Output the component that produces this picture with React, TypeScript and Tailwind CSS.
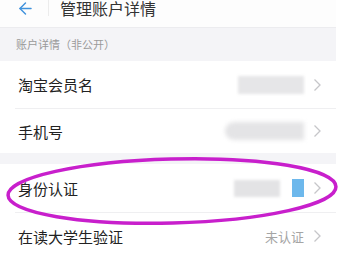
import { ArrowLeft } from "lucide-react";

function Chevron() {
  return (
    <svg width="9" height="14" viewBox="0 0 9 14" className="ml-[9px] shrink-0">
      <polyline points="1.5,1.5 7,7 1.5,12.5" fill="none" stroke="#c6c6c9" strokeWidth="1.3" />
    </svg>
  );
}

function Row({ label, h, children }: { label: string; h: string; children: React.ReactNode }) {
  return (
    <div className={`flex items-center pl-[18px] pr-[14px] bg-white ${h}`}>
      <span className="text-[15px] text-[#222] leading-none">{label}</span>
      <div className="ml-auto flex items-center">
        {children}
        <Chevron />
      </div>
    </div>
  );
}

export default function App() {
  return (
    <div
      className="relative w-[341px] h-[253px] overflow-hidden bg-white"
      style={{ fontFamily: '"Noto Sans CJK SC", "Noto Sans", sans-serif' }}
    >
      <div className="w-[336px]">
        {/* header, cut off at the top */}
        <div className="h-[28px] border-b border-[#ececef] bg-[#fdfdfd]">
          <div className="h-[16px] flex items-center">
            <ArrowLeft className="ml-[16px] text-[#4092dc]" size={19} strokeWidth={1.8} />
            <div className="ml-[13px] w-px h-[16px] bg-[#ececec]" />
            <span className="ml-[11px] text-[16px] text-[#333] leading-none">管理账户详情</span>
          </div>
        </div>

        <div className="h-[33px] bg-[#f4f4f7] pl-[16px] flex items-center">
          <span className="text-[11px] text-[#9a9a9a] leading-none">账户详情（非公开）</span>
        </div>

        <Row label="淘宝会员名" h="h-[47px]">
          <div className="w-[66px] h-[18px] bg-[#e6e6e8] blur-[1.5px]" />
        </Row>
        <div className="h-px bg-[#efeff1] ml-[15px]" />
        <Row label="手机号" h="h-[44px]">
          <div className="w-[79px] h-[18px] rounded-l-full bg-[#e4e4e6] blur-[2px]" />
        </Row>

        <div className="h-[11px] bg-[#f4f4f7]" />

        <Row label="身份认证" h="h-[48px]">
          <div className="w-[46px] h-[17px] bg-[#e3e3e5] blur-[1.5px]" />
          <div className="ml-[12px] w-[12px] h-[18px] bg-[#6db8ec]" />
        </Row>
        <div className="h-px bg-[#efeff1] ml-[15px]" />
        <Row label="在读大学生验证" h="h-[46px]">
          <span className="text-[13px] text-[#a5a5a5] leading-none">未认证</span>
        </Row>
      </div>

      {/* hand-drawn highlight */}
      <svg className="absolute inset-0 pointer-events-none" width="341" height="253">
        <ellipse
          cx="172"
          cy="191"
          rx="164"
          ry="32"
          transform="rotate(-1.5 172 191)"
          fill="none"
          stroke="#c81fcc"
          strokeWidth="3.5"
        />
      </svg>
    </div>
  );
}
